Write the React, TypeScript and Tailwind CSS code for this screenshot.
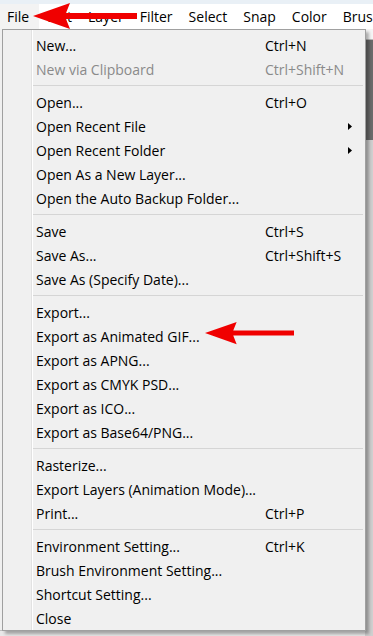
import React from "react";

type Item =
  | { sep: true }
  | { label: string; shortcut?: string; disabled?: boolean; sub?: boolean };

const items: Item[] = [
  { label: "New...", shortcut: "Ctrl+N" },
  { label: "New via Clipboard", shortcut: "Ctrl+Shift+N", disabled: true },
  { sep: true },
  { label: "Open...", shortcut: "Ctrl+O" },
  { label: "Open Recent File", sub: true },
  { label: "Open Recent Folder", sub: true },
  { label: "Open As a New Layer..." },
  { label: "Open the Auto Backup Folder..." },
  { sep: true },
  { label: "Save", shortcut: "Ctrl+S" },
  { label: "Save As...", shortcut: "Ctrl+Shift+S" },
  { label: "Save As (Specify Date)..." },
  { sep: true },
  { label: "Export..." },
  { label: "Export as Animated GIF..." },
  { label: "Export as APNG..." },
  { label: "Export as CMYK PSD..." },
  { label: "Export as ICO..." },
  { label: "Export as Base64/PNG..." },
  { sep: true },
  { label: "Rasterize..." },
  { label: "Export Layers (Animation Mode)..." },
  { label: "Print...", shortcut: "Ctrl+P" },
  { sep: true },
  { label: "Environment Setting...", shortcut: "Ctrl+K" },
  { label: "Brush Environment Setting..." },
  { label: "Shortcut Setting..." },
  { label: "Close" },
];

const menus = ["File", "Edit", "Layer", "Filter", "Select", "Snap", "Color", "Brush"];

const RedArrow = ({ className }: { className: string }) => (
  <svg className={className} viewBox="0 0 104 26" fill="#f00000">
    <path d="M0 13 L37 0 L33 10 L104 10 L104 16 L33 16 L37 26 Z" />
  </svg>
);

export default function App() {
  return (
    <div
      className="relative w-[373px] h-[636px] overflow-hidden bg-[#f0f0f0] text-[14px] text-black"
      style={{ fontFamily: '"Open Sans", "Noto Sans", sans-serif' }}
    >
      {/* top strip + menu bar */}
      <div className="h-[4px] bg-[#e9f0f6]" />
      <div className="h-[25px] bg-white flex items-center">
        {menus.map((m, i) => (
          <span
            key={m}
            className={
              i === 0
                ? "pl-[7px] pr-[10px] h-full flex items-center bg-[#f3f3f3]"
                : "px-[8px] h-full flex items-center"
            }
          >
            {m}
          </span>
        ))}
      </div>

      {/* app background behind the menu */}
      <div className="flex h-[607px]">
        <div className="flex-1 flex flex-col">
          <div className="flex-1 bg-[#f0f0f0]" />
          <div className="h-[6px] bg-[#e8e8e8] border-t border-[#bdbdbd]" />
        </div>
        <div className="w-[8px] flex flex-col">
          <div className="h-[11px] bg-[#f5f5f5] border-b border-[#bbb]" />
          <div className="h-[100px] bg-[#6b6b6b]" />
          <div className="flex-1 bg-[#cfcfcf]" />
        </div>
      </div>

      {/* dropdown */}
      <div className="absolute left-[2px] top-[29px] w-[364px] h-[602px] bg-[#f0f0f0] border border-[#a0a0a0] shadow-[3px_3px_3px_rgba(0,0,0,0.3)] flex">
        <div className="w-[29px] shrink-0 bg-[#f0f0f0] border-r border-[#e2e2e2]" />
        <div className="w-px bg-white" />
        <div className="flex-1 pt-[3px] pr-[2px]">
          {items.map((it, i) =>
            "sep" in it ? (
              <div key={i} className="h-[9px] flex items-center">
                <div className="w-full h-px bg-[#d5d5d5]" />
              </div>
            ) : (
              <div
                key={i}
                className={`h-6 flex items-center pl-[3px] ${it.disabled ? "text-[#8a8a8a]" : ""}`}
              >
                <span className="w-[229px] shrink-0 whitespace-nowrap">{it.label}</span>
                <span className="flex-1 whitespace-nowrap">{it.shortcut}</span>
                {it.sub && (
                  <svg className="w-[4px] h-[7px] mr-[11px]" viewBox="0 0 4 7">
                    <path d="M0 0 L4 3.5 L0 7 Z" fill="#000" />
                  </svg>
                )}
              </div>
            )
          )}
        </div>
      </div>

      <RedArrow className="absolute left-[33px] top-[3px] w-[104px] h-[26px]" />
      <RedArrow className="absolute left-[205px] top-[321px] w-[89px] h-[24px]" />
    </div>
  );
}
